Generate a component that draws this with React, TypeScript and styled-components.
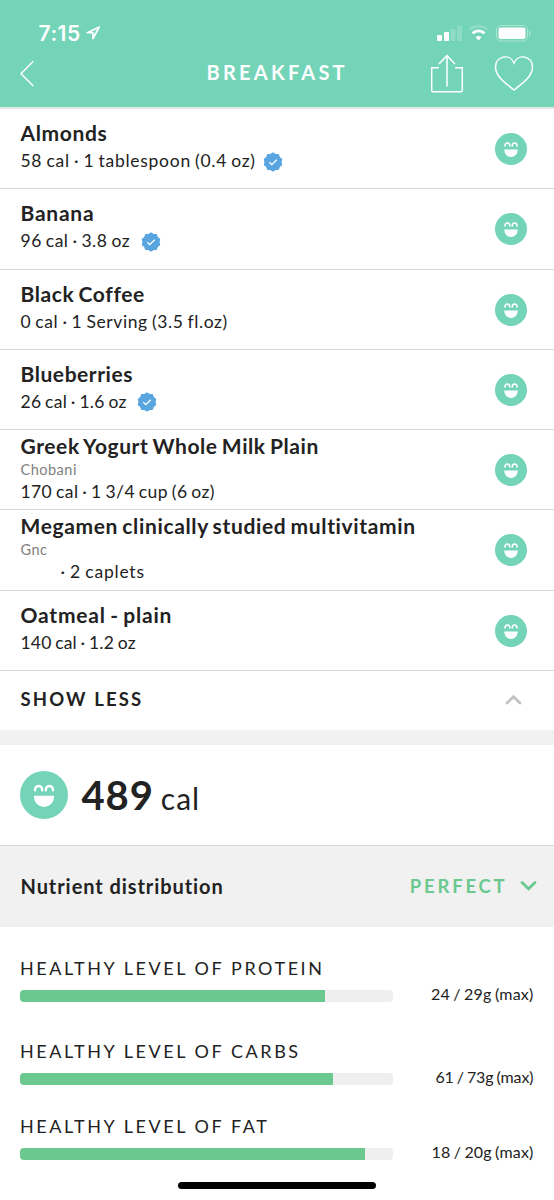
import React from "react";
import styled, { createGlobalStyle } from "styled-components";

const mint = "#73d4b7";
const green = "#6bc98f";
const ink = "#222222";

const GlobalStyle = createGlobalStyle`
  * { box-sizing: border-box; }
  body { margin: 0; background: #fff; }
`;

const Screen = styled.div`
  position: relative;
  display: flex;
  flex-direction: column;
  width: 554px;
  height: 1200px;
  overflow: hidden;
  background: #fff;
  color: ${ink};
  font-family: Lato, "Liberation Sans", sans-serif;
`;

const Text = styled.span<{ $size: number; $line: number; $weight?: number; $spacing?: number }>`
  display: block;
  white-space: pre;
  font-size: ${(p) => p.$size}px;
  line-height: ${(p) => p.$line}px;
  font-weight: ${(p) => p.$weight ?? 400};
  letter-spacing: ${(p) => p.$spacing ?? 0}px;
`;

const Header = styled.header`
  height: 109px;
  flex: none;
  background: ${mint};
  border-bottom: 2px solid #e0e8e5;
  color: #fff;
`;

const StatusBar = styled.div`
  display: flex;
  justify-content: space-between;
  height: 50px;
  padding: 21px 23px 0 38.5px;
`;

const Clock = styled.div`
  display: flex;
  gap: 5px;
  font-family: Inter, sans-serif;
  & > svg { margin-top: 4px; }
`;

const StatusIcons = styled.svg`
  display: block;
  margin-top: 3px;
`;

const NavBar = styled.div`
  display: grid;
  grid-template-columns: 186.5px 1fr 160px;
  height: 47px;
  padding: 0 20px;
`;

const NavTitle = styled(Text)`
  margin-top: 9px;
`;

const NavActions = styled.div`
  display: flex;
  justify-content: flex-end;
  gap: 30px;
  padding-top: 4px;
`;

const BackIcon = styled.svg`
  margin-top: 10px;
`;

const FoodList = styled.ul`
  flex: none;
  margin: 0;
  padding: 0;
  list-style: none;
`;

const FoodRow = styled.li<{ $branded: boolean }>`
  display: flex;
  justify-content: space-between;
  height: 80.25px;
  padding: ${(p) => (p.$branded ? 3 : 11)}px 27px 0 20.5px;
  border-bottom: 1px solid #d8d8d8;
  & > svg { margin-top: ${(p) => (p.$branded ? 21 : 13)}px; }
`;

const FoodName = styled(Text)`
  word-spacing: -1.5px;
`;

const Brand = styled(Text)`
  margin-top: 1.5px;
  margin-bottom: -0.5px;
  color: #808080;
`;

const Detail = styled.div<{ $indent?: boolean; $branded?: boolean }>`
  display: flex;
  align-items: center;
  gap: 7px;
  margin-top: ${(p) => (p.$branded ? 0 : 2)}px;
  padding-left: ${(p) => (p.$indent ? 40 : 0)}px;
  word-spacing: -1px;
`;

const VerifiedMark = styled.svg`
  margin-top: 1px;
`;

const ShowLess = styled.button`
  display: flex;
  flex: none;
  justify-content: space-between;
  align-items: center;
  height: 59.25px;
  padding: 0 32px 2px 20.5px;
  border: 0;
  background: #fff;
  color: ${ink};
  font-family: inherit;
`;

const Divider = styled.div`
  flex: none;
  height: 15px;
  background: #f1f1f1;
`;

const Summary = styled.section`
  display: flex;
  flex: none;
  align-items: center;
  height: 101px;
  padding: 0 20px;
  gap: 13.5px;
  border-bottom: 1px solid #d8d8d8;
`;

const Total = styled.div`
  display: flex;
  align-items: baseline;
  gap: 7px;
  padding-top: 2px;
`;

const Distribution = styled.section`
  display: flex;
  flex: none;
  justify-content: space-between;
  align-items: center;
  height: 81px;
  padding: 0 17px 2px 20.5px;
  background: #f1f1f1;
`;

const Rating = styled.div`
  display: flex;
  align-items: center;
  gap: 12.5px;
  color: ${green};
`;

const Levels = styled.section`
  display: flex;
  flex-direction: column;
  padding: 29px 20.5px 0 20px;
`;

const Level = styled.div<{ $height: number }>`
  display: grid;
  grid-template-columns: 373px 1fr;
  grid-template-rows: 24px 30px;
  height: ${(p) => p.$height}px;
`;

const LevelName = styled(Text)`
  grid-column: 1 / 3;
`;

const Track = styled.div`
  height: 12px;
  margin-top: 10px;
  border-radius: 4px;
  overflow: hidden;
  background: #efefef;
`;

const Fill = styled.div`
  height: 100%;
  background: ${green};
`;

const Amount = styled(Text)`
  margin-top: 4px;
  justify-self: end;
  word-spacing: -1px;
`;

const HomeIndicator = styled.div`
  position: absolute;
  left: 178px;
  bottom: 11px;
  width: 198px;
  height: 7px;
  border-radius: 4px;
  background: #000;
`;

const Face = ({ size }: { size: number }) => (
  <svg width={size} height={size} viewBox="0 0 48 48" fill="none">
    <circle cx="24" cy="24" r="24" fill={mint} />
    <path
      d="M15 19.4c.2-5.800 7-5.800 7.200 0M25.800 19.400c.2-5.800 7-5.800 7.200 0"
      stroke="#fff"
      strokeWidth="2.4"
      strokeLinecap="round"
    />
    <path d="M14 24.800h20v1.200a10 10 0 0 1-20 0z" fill="#fff" />
  </svg>
);

const sealPoints = Array.from({ length: 20 }, (_, i) => {
  const radius = i % 2 === 0 ? 9.1 : 7.900;
  const angle = (i * Math.PI) / 10 - Math.PI / 2;
  return `${(10 + radius * Math.cos(angle)).toFixed(2)},${(10 + radius * Math.sin(angle)).toFixed(2)}`;
}).join(" ");

const Verified = () => (
  <VerifiedMark width="20" height="20" viewBox="0 0 20 20">
    <polygon points={sealPoints} fill="#59a5e0" stroke="#59a5e0" strokeWidth="1.200" strokeLinejoin="round" />
    <path d="M6.300 10.200l2.500 2.500 4.900-5" fill="none" stroke="#fff" strokeWidth="1.300" />
  </VerifiedMark>
);

const Chevron = ({ up, color }: { up?: boolean; color: string }) => (
  <svg width="17" height="11" viewBox="0 0 17 11" fill="none">
    <path
      d={up ? "M2 9l6.500-6.300L15 9" : "M2 2.500l6.500 6.300L15 2.500"}
      stroke={color}
      strokeWidth="2.800"
      strokeLinecap="round"
    />
  </svg>
);

interface Food {
  name: string;
  nameSpacing: number;
  brand?: string;
  detail: string;
  detailSpacing: number;
  verified?: boolean;
  indent?: boolean;
}

const foods: Food[] = [
  { name: "Almonds", nameSpacing: 0.65, detail: "58 cal · 1 tablespoon (0.4 oz)", detailSpacing: 0.72, verified: true },
  { name: "Banana", nameSpacing: 0.75, detail: "96 cal · 3.8 oz ", detailSpacing: 0.5, verified: true },
  { name: "Black Coffee", nameSpacing: 0.6, detail: "0 cal · 1 Serving (3.5 fl.oz)", detailSpacing: 0.6 },
  { name: "Blueberries", nameSpacing: 0.55, detail: "26 cal · 1.6 oz ", detailSpacing: 0.27, verified: true },
  { name: "Greek Yogurt Whole Milk Plain", nameSpacing: 0.59, brand: "Chobani", detail: "170 cal · 1 3/4 cup (6 oz)", detailSpacing: 0.4 },
  { name: "Megamen clinically studied multivitamin", nameSpacing: 0.64, brand: "Gnc", detail: "· 2 caplets", detailSpacing: 0.78, indent: true },
  { name: "Oatmeal - plain", nameSpacing: 0.8, detail: "140 cal · 1.2 oz", detailSpacing: 0.19 },
];

const levels = [
  { name: "HEALTHY LEVEL OF PROTEIN", fill: 304.5, amount: "24 / 29g (max)", height: 83, spacing: 0.22 },
  { name: "HEALTHY LEVEL OF CARBS", fill: 313, amount: "61 / 73g (max)", height: 75, spacing: -0.1 },
  { name: "HEALTHY LEVEL OF FAT", fill: 344.7, amount: "18 / 20g (max)", height: 60, spacing: 0.18 },
];

export default function App() {
  return (
    <Screen>
      <GlobalStyle />
      <Header>
        <StatusBar>
          <Clock>
            <Text $size={21} $line={25} $weight={600} $spacing={0.5}>7:15</Text>
            <svg width="15" height="16" viewBox="0 0 15 16" fill="none">
              <path d="M13.200 2L1.200 7.700h5.700v5.900z" stroke="#fff" strokeWidth="1.700" strokeLinejoin="round" />
            </svg>
          </Clock>
          <StatusIcons width="95" height="18" viewBox="0 0 95 18" fill="#fff">
            <rect x="1" y="11" width="5" height="6" rx="1" />
            <rect x="8" y="8" width="5" height="9" rx="1" />
            <rect x="14.500" y="5" width="5" height="12" rx="1" opacity=".2" />
            <rect x="21" y="1.500" width="5" height="15.500" rx="1" opacity=".2" />
            <path d="M33.500 5.500c5.500-4.500 12.500-4.500 18 0" fill="none" stroke="#fff" strokeWidth="2.800" opacity=".2" />
            <path d="M36.500 9.300c3.700-3.200 8.400-3.200 12 0" fill="none" stroke="#fff" strokeWidth="2.800" />
            <path d="M39.500 13.200q3-2.200 6 0l-3 3.300z" />
            <rect x="60.500" y="1.500" width="31" height="15.500" rx="4.500" fill="none" stroke="#fff" opacity=".4" />
            <rect x="62.500" y="3.500" width="27" height="11.500" rx="2.500" />
            <path d="M93 6.500c2 .8 2 4.700 0 5.500z" opacity=".45" />
          </StatusIcons>
        </StatusBar>
        <NavBar>
          <BackIcon width="16" height="28" viewBox="0 0 16 28" fill="none">
            <path d="M13.300 1.300L1 13.700L13.300 26" stroke="#fff" strokeWidth="1.400" />
          </BackIcon>
          <NavTitle $size={20} $line={26} $weight={700} $spacing={3.25}>BREAKFAST</NavTitle>
          <NavActions>
            <svg width="34" height="40" viewBox="0 0 34 40" fill="none" stroke="#fff" strokeWidth="1.500">
              <path d="M9 13.800H1.700v22.500a1.500 1.500 0 0 0 1.500 1.500h27.600a1.500 1.500 0 0 0 1.500-1.500V13.800H25M17 32.500V2M9 10l8-8.300 8 8.300" />
            </svg>
            <svg width="40" height="40" viewBox="0 0 40 40" fill="none" stroke="#fff" strokeWidth="1.500">
              <path d="M20 9C16-1 1.500 2 1.500 13c0 10 11 17 18.500 23 7.500-6 18.500-13 18.500-23C38.500 2 24 -1 20 9z" />
            </svg>
          </NavActions>
        </NavBar>
      </Header>

      <FoodList>
        {foods.map((f) => (
          <FoodRow key={f.name} $branded={!!f.brand}>
            <div>
              <FoodName $size={21} $line={26} $weight={700} $spacing={f.nameSpacing}>{f.name}</FoodName>
              {f.brand && <Brand $size={14.500} $line={18.500} $spacing={0.5}>{f.brand}</Brand>}
              <Detail $indent={f.indent} $branded={!!f.brand}>
                <Text $size={17.500} $line={26} $spacing={f.detailSpacing}>{f.detail}</Text>
                {f.verified && <Verified />}
              </Detail>
            </div>
            <Face size={32} />
          </FoodRow>
        ))}
      </FoodList>

      <ShowLess>
        <Text $size={18.500} $line={24} $weight={700} $spacing={2.15}>SHOW LESS</Text>
        <Chevron up color="#c2c2c2" />
      </ShowLess>
      <Divider />

      <Summary>
        <Face size={48} />
        <Total>
          <Text $size={40} $line={48} $weight={700} $spacing={0.9}>489</Text>
          <Text $size={30} $line={48} $spacing={1}>cal</Text>
        </Total>
      </Summary>

      <Distribution>
        <Text $size={20} $line={26} $weight={700} $spacing={0.93}>Nutrient distribution</Text>
        <Rating>
          <Text $size={18.500} $line={24} $weight={700} $spacing={2.8}>PERFECT</Text>
          <Chevron color={green} />
        </Rating>
      </Distribution>

      <Levels>
        {levels.map((l) => (
          <Level key={l.name} $height={l.height}>
            <LevelName $size={18} $line={24} $spacing={2.55}>{l.name}</LevelName>
            <Track>
              <Fill style={{ width: l.fill }} />
            </Track>
            <Amount $size={16} $line={20} $spacing={l.spacing}>{l.amount}</Amount>
          </Level>
        ))}
      </Levels>
      <HomeIndicator />
    </Screen>
  );
}
